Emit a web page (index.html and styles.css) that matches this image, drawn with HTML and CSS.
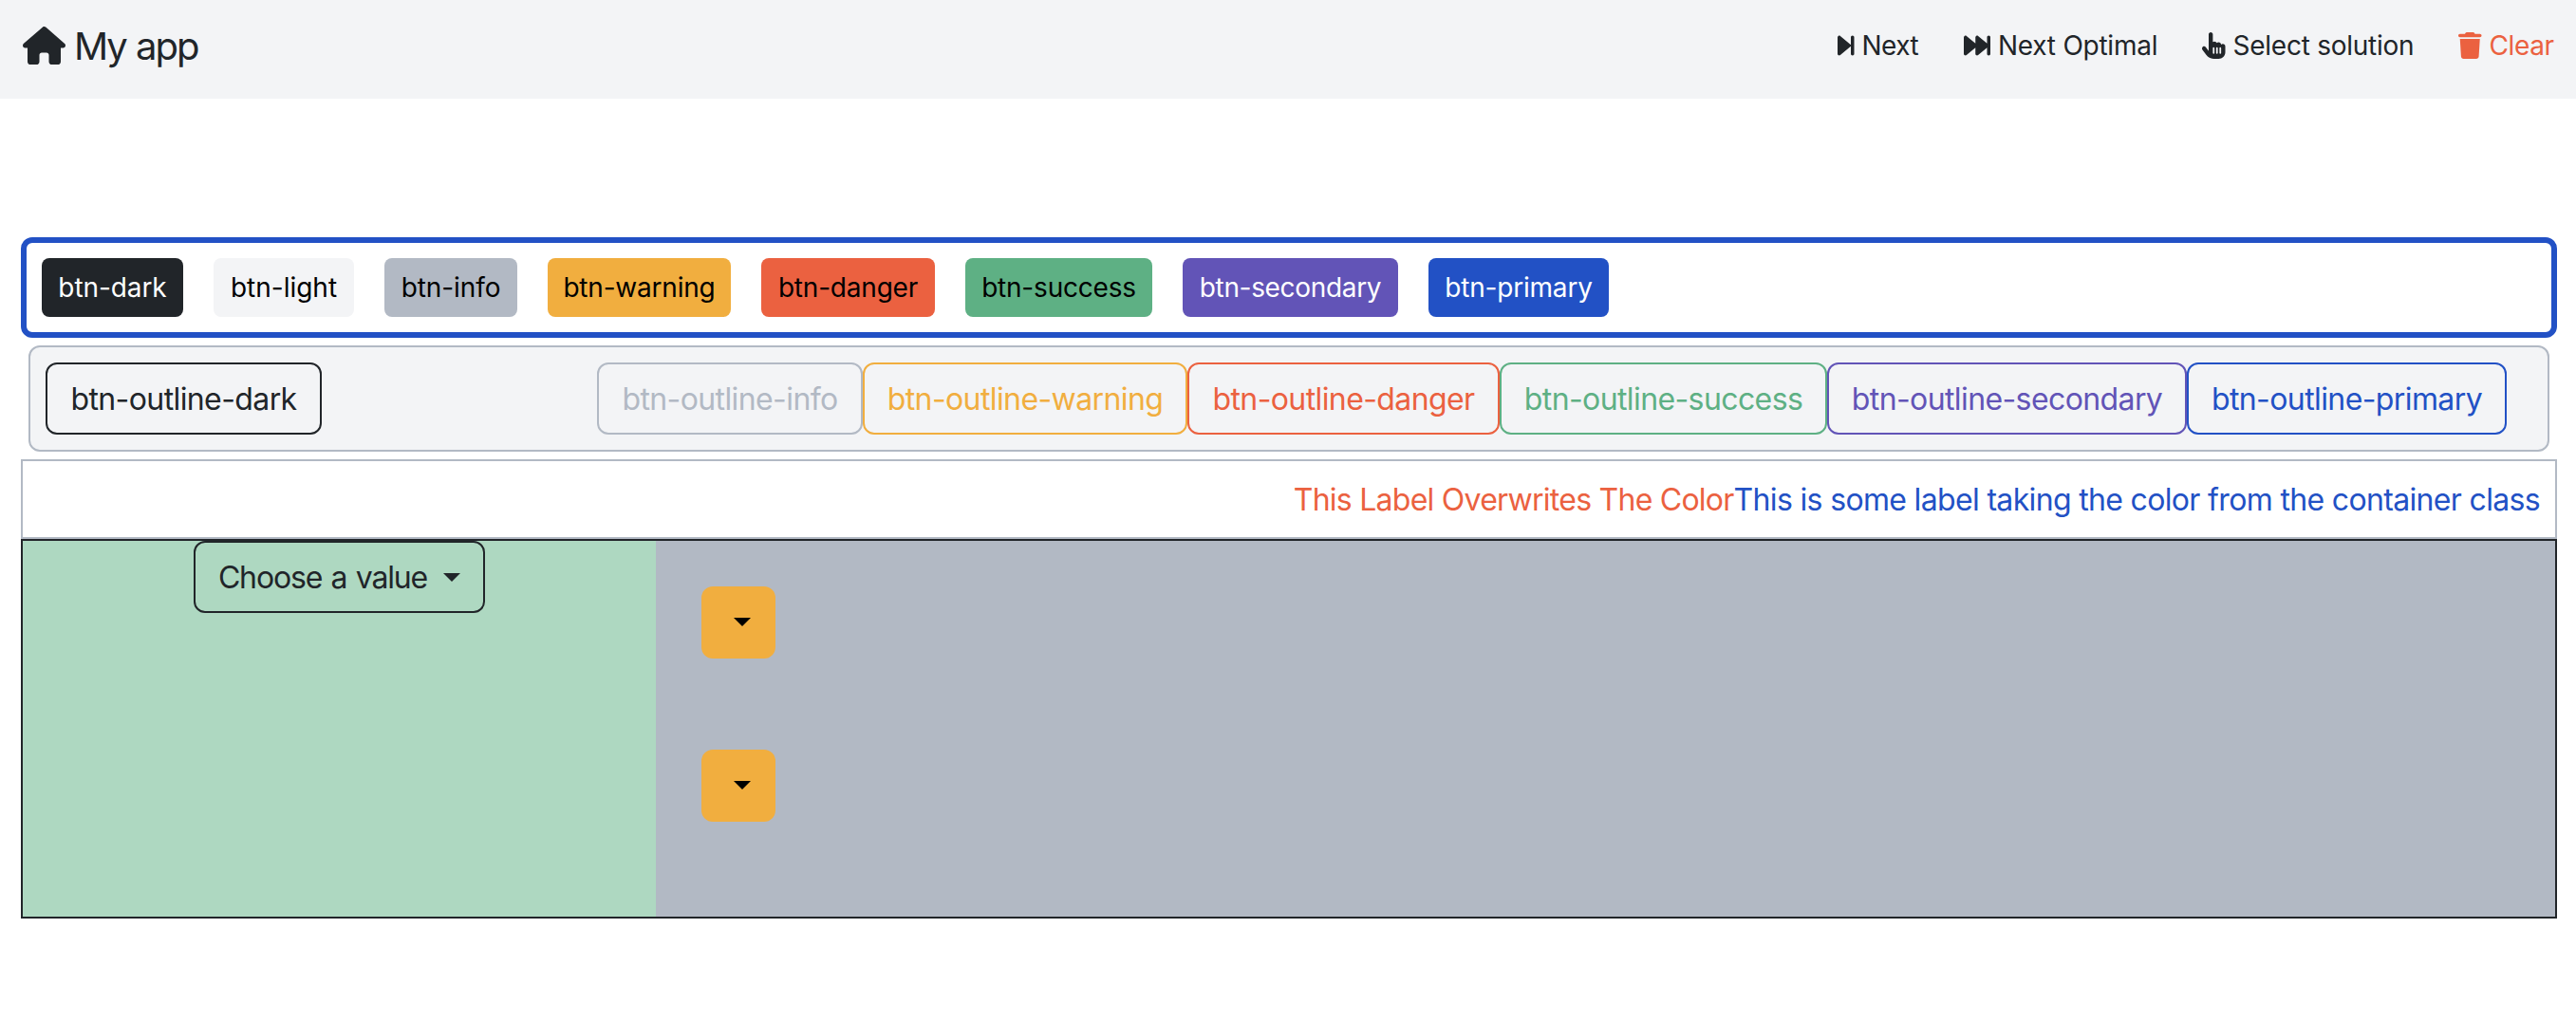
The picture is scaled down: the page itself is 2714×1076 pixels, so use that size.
FILE: index.html
```html
<!DOCTYPE html>
<html lang="en">
<head>
<meta charset="utf-8">
<title>My app</title>
<link rel="stylesheet" href="styles.css">
</head>
<body>
<nav class="navbar">
  <a class="brand"><svg class="home-icon" viewBox="0 0 576 512"><path d="M575.8 255.5c0 18-15 32.1-32 32.1h-32l.7 160.2c0 2.7-.2 5.4-.5 8.1V472c0 22.1-17.9 40-40 40H456c-1.1 0-2.2 0-3.3-.1c-1.4 .1-2.8 .1-4.2 .1H416 392c-22.1 0-40-17.9-40-40V448 384c0-17.7-14.3-32-32-32H256c-17.7 0-32 14.3-32 32v64 24c0 22.1-17.9 40-40 40H160 128.1c-1.5 0-3-.1-4.5-.2c-1.2 .1-2.4 .2-3.6 .2H104c-22.1 0-40-17.9-40-40V360c0-.9 0-1.9 .1-2.8V287.6H32c-18 0-32-14-32-32.1c0-9 3-17 10-24L266.4 8c7-7 15-8 22-8s15 2 21 7L564.8 231.5c8 7 12 15 11 24z"/></svg><span>My app</span></a>
  <div class="actions">
    <a class="action next"><svg class="w-step" viewBox="0 0 320 512"><path d="M52.5 440.6c-9.5 7.9-22.8 9.7-34.1 4.4S0 428.4 0 416V96C0 83.6 7.2 72.3 18.4 67s24.5-3.6 34.1 4.4l192 160L256 241V96c0-17.7 14.3-32 32-32s32 14.3 32 32V416c0 17.7-14.3 32-32 32s-32-14.3-32-32V271l-11.5 9.6-192 160z"/></svg><span>Next</span></a>
    <a class="action optimal"><svg class="w-fast" viewBox="0 0 512 512"><path d="M18.4 445c11.2 5.3 24.5 3.6 34.1-4.4L224 297.7V416c0 12.4 7.2 23.7 18.4 29s24.5 3.6 34.1-4.4L448 297.7V416c0 17.7 14.3 32 32 32s32-14.3 32-32V96c0-17.7-14.3-32-32-32s-32 14.3-32 32V214.3L276.5 71.4c-9.5-7.9-22.8-9.7-34.1-4.4S224 83.6 224 96V214.3L52.5 71.4c-9.5-7.9-22.8-9.7-34.1-4.4S0 83.6 0 96V416c0 12.4 7.2 23.7 18.4 29z"/></svg><span>Next Optimal</span></a>
    <a class="action select"><svg class="w-hand" viewBox="0 0 448 512"><path d="M128 40c0-22.1 17.9-40 40-40s40 17.9 40 40V188.2c8.5-7.6 19.7-12.2 32-12.2c20.6 0 38.2 13 45 31.2c8.8-9.3 21.2-15.2 35-15.2c25.3 0 46 19.5 47.9 44.3c8.5-7.7 19.8-12.3 32.1-12.3c26.5 0 48 21.5 48 48v48 16 48c0 70.7-57.3 128-128 128l-16 0H240l-.1 0h-5.2c-5 0-9.9-.3-14.7-1c-55.3-5.6-106.2-34-140-79L8 336c-13.3-17.7-9.7-42.7 8-56s42.7-9.7 56 8l56 74.7V40zM240 304c0-8.8-7.2-16-16-16s-16 7.2-16 16v96c0 8.8 7.2 16 16 16s16-7.2 16-16V304zm48-16c-8.8 0-16 7.2-16 16v96c0 8.8 7.2 16 16 16s16-7.2 16-16V304c0-8.8-7.2-16-16-16zm80 16c0-8.8-7.2-16-16-16s-16 7.2-16 16v96c0 8.8 7.2 16 16 16s16-7.2 16-16V304z"/></svg><span>Select solution</span></a>
    <a class="action clear"><svg class="w-hand" viewBox="0 0 448 512"><path d="M135.2 17.7L128 32H32C14.3 32 0 46.3 0 64S14.3 96 32 96H416c17.7 0 32-14.3 32-32s-14.3-32-32-32H320l-7.2-14.3C307.4 6.8 296.3 0 284.2 0H163.8c-12.1 0-23.2 6.8-28.6 17.7zM416 128H32L53.2 467c1.6 25.3 22.6 45 47.9 45H346.9c25.3 0 46.3-19.7 47.9-45L416 128z"/></svg><span>Clear</span></a>
  </div>
</nav>
<main class="content">
  <section class="solid-row">
    <button class="btn dark">btn-dark</button>
    <button class="btn light">btn-light</button>
    <button class="btn info">btn-info</button>
    <button class="btn warning">btn-warning</button>
    <button class="btn danger">btn-danger</button>
    <button class="btn success">btn-success</button>
    <button class="btn secondary">btn-secondary</button>
    <button class="btn primary">btn-primary</button>
  </section>
  <section class="outline-row">
    <button class="btn-outline o-dark">btn-outline-dark</button>
    <button class="btn-outline o-info">btn-outline-info</button>
    <button class="btn-outline o-warning">btn-outline-warning</button>
    <button class="btn-outline o-danger">btn-outline-danger</button>
    <button class="btn-outline o-success">btn-outline-success</button>
    <button class="btn-outline o-secondary">btn-outline-secondary</button>
    <button class="btn-outline o-primary">btn-outline-primary</button>
  </section>
  <section class="label-row"><span class="label-danger">This Label Overwrites The Color</span><span class="label-primary">This is some label taking the color from the container class</span></section>
  <section class="panel">
    <div class="side"><button class="btn-outline chooser"><span>Choose a value</span><i class="caret"></i></button></div>
    <div class="main">
      <button class="drop"><i class="caret"></i></button>
      <button class="drop"><i class="caret"></i></button>
    </div>
  </section>
</main>
</body>
</html>
```
FILE: styles.css
```css
* { box-sizing: border-box; }
body {
  margin: 0;
  background: #fff;
  color: #212529;
  font-family: Inter, "Liberation Sans", sans-serif;
  font-size: 32px;
}
button { font: inherit; margin: 0; padding: 0; white-space: nowrap; }
svg { display: block; fill: currentColor; flex: none; }

.navbar {
  height: 104px;
  padding: 0 24px 8px;
  display: flex;
  align-items: center;
  justify-content: space-between;
  background: #f3f4f6;
}
.brand { display: flex; align-items: center; gap: 9px; font-size: 40px; letter-spacing: -2px; word-spacing: 1px; white-space: nowrap; }
.home-icon { width: 45px; height: 40px; }
.actions { display: flex; gap: 48px; font-size: 28px; letter-spacing: -0.25px; }
.action { display: flex; align-items: center; gap: 8px; white-space: nowrap; }
.action svg { height: 28px; }
.w-step { width: 17.5px; }
.w-fast { width: 28px; }
.w-hand { width: 24.5px; }
.next { width: 85px; letter-spacing: -0.5px; }
.optimal { width: 203px; }
.select { width: 222px; }
.clear { width: 100px; color: #eb6140; letter-spacing: -0.4px; }

.content { padding: 146px 20px 0 22px; }

.solid-row {
  height: 106px;
  padding: 0 16px;
  display: flex;
  align-items: center;
  gap: 32px;
  border: 6px solid #2251c5;
  border-radius: 12px;
}
.btn { height: 62px; border: 0; border-radius: 8px; font-size: 28px; letter-spacing: -0.2px; color: #000; }
.dark { width: 149px; background: #212529; color: #fff; letter-spacing: -0.08px; }
.light { width: 148px; background: #f3f4f6; letter-spacing: 0; }
.info { width: 140px; background: #b2b9c4; letter-spacing: -0.08px; }
.warning { width: 193px; background: #f1ae3f; }
.danger { width: 183px; background: #eb6140; }
.success { width: 197px; background: #5eb084; }
.secondary { width: 227px; background: #6254b7; color: #fff; letter-spacing: -0.33px; }
.primary { width: 190px; background: #2251c5; color: #fff; }

.outline-row {
  height: 112px;
  margin: 8px;
  padding: 0 16px;
  display: flex;
  align-items: center;
  background: #f3f4f6;
  border: 2px solid #b2b9c4;
  border-radius: 12px;
}
.btn-outline {
  height: 76px;
  border: 2px solid currentColor;
  border-radius: 12px;
  background: transparent;
  font-size: 32px;
  letter-spacing: -0.6px;
}
.o-dark { width: 291px; color: #212529; }
.o-info { width: 280px; margin-left: 290px; color: #b2b9c4; }
.o-warning { width: 342px; color: #f1ae3f; }
.o-danger { width: 329px; color: #eb6140; }
.o-success { width: 345px; color: #5eb084; }
.o-secondary { width: 379px; color: #6254b7; }
.o-primary { width: 337px; color: #2251c5; }

.label-row {
  height: 84px;
  padding-right: 16px;
  display: flex;
  align-items: center;
  justify-content: flex-end;
  border: 2px solid #b2b9c4;
  white-space: nowrap;
}
.label-danger { color: #eb6140; letter-spacing: -0.75px; }
.label-primary { color: #2251c5; letter-spacing: -0.66px; }

.panel { height: 400px; display: flex; border: 2px solid #212529; }
.side { width: 667px; display: flex; justify-content: center; align-items: flex-start; background: #aed8c1; }
.chooser {
  width: 307px;
  display: flex;
  align-items: center;
  justify-content: center;
  gap: 17px;
  color: #212529;
  letter-spacing: -1.15px;
  word-spacing: 1.5px;
}
.caret {
  width: 0;
  height: 0;
  border-top: 9.6px solid currentColor;
  border-left: 9.6px solid transparent;
  border-right: 9.6px solid transparent;
}
.main { flex: 1; padding: 48px; display: flex; flex-direction: column; gap: 96px; background: #b2b9c4; }
.drop {
  width: 78px;
  height: 76px;
  padding: 0 0 2px 8px;
  display: flex;
  align-items: center;
  justify-content: center;
  border: 0;
  border-radius: 12px;
  background: #f1ae3f;
  color: #000;
}
```
